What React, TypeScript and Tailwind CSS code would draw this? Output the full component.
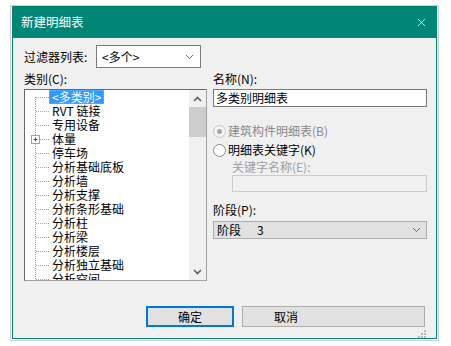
import { X } from 'lucide-react';

const treeItems = [
  '<多类别>',
  'RVT 链接',
  '专用设备',
  '体量',
  '停车场',
  '分析基础底板',
  '分析墙',
  '分析支撑',
  '分析条形基础',
  '分析柱',
  '分析梁',
  '分析楼层',
  '分析独立基础',
  '分析空间',
];

function Chevron({ up = false, thin = false }: { up?: boolean; thin?: boolean }) {
  return (
    <svg width="9" height="6" viewBox="0 0 9 6">
      <polyline
        points={up ? '1,5 4.5,1.5 8,5' : '1,1 4.5,4.5 8,1'}
        fill="none"
        stroke={thin ? '#6d6d6d' : '#606060'}
        strokeWidth={thin ? 1 : 1.6}
      />
    </svg>
  );
}

function TreeRow({ label, index }: { label: string; index: number }) {
  const first = index === 0;
  const hasPlus = label === '体量';
  return (
    <div className="flex h-[14px] items-center">
      {/* connector lines */}
      <svg width="24" height="14" viewBox="0 0 24 14" className="shrink-0">
        <line x1="10.5" y1={first ? 7 : 0} x2="10.5" y2="14" stroke="#a0a0a0" strokeDasharray="1 1" />
        <line x1="11" y1="7.5" x2="24" y2="7.5" stroke="#a0a0a0" strokeDasharray="1 1" />
        {hasPlus && (
          <g>
            <rect x="6.5" y="3.5" width="8" height="8" fill="#fff" stroke="#a0a0a0" />
            <line x1="8.5" y1="7.5" x2="12.5" y2="7.5" stroke="#2c4c9c" />
            <line x1="10.5" y1="5.5" x2="10.5" y2="9.5" stroke="#2c4c9c" />
          </g>
        )}
      </svg>
      {first ? (
        <span className="h-[14px] px-[2px] flex items-center bg-[#3399ff] text-white border border-dotted border-[#e0a040] whitespace-nowrap">
          <span className="leading-[12px]">{label}</span>
        </span>
      ) : (
        <span className="pl-[3px] leading-[14px] whitespace-nowrap">{label}</span>
      )}
    </div>
  );
}

function ResizeGrip() {
  const dots = [
    [6, 0],
    [3, 3],
    [6, 3],
    [0, 6],
    [3, 6],
    [6, 6],
  ];
  return (
    <svg width="8" height="8" viewBox="0 0 8 8">
      {dots.map(([x, y]) => (
        <rect key={`${x}-${y}`} x={x} y={y} width="2" height="2" fill="#b8b8b8" />
      ))}
    </svg>
  );
}

export default function App() {
  return (
    <div className="w-[451px] h-[346px] bg-white pt-[5px] pl-[10px] font-['Noto_Sans_CJK_SC','Noto_Sans',sans-serif] text-[12px] text-black">
      <div className="w-[429px] h-[336px] border border-[#cfcfcf] px-px pb-px">
        <div className="w-[425px] h-[333px] border border-[#018574] flex flex-col">
          {/* Title bar */}
          <div className="h-[31px] bg-[#018574] flex items-center justify-between pl-[8px] pr-[8px] text-white">
            <span className="text-[12.5px] leading-none">新建明细表</span>
            <X className="w-[13px] h-[13px]" strokeWidth={1.4} />
          </div>

          {/* Body */}
          <div className="flex-1 bg-[#f0f0f0] pt-[7px] pl-[11px] pr-[9px] flex flex-col">
            {/* Filter list */}
            <div className="flex items-center h-[23px]">
              <span className="w-[72px]">过滤器列表:</span>
              <div className="w-[105px] h-[23px] bg-white border border-[#7a7a7a] flex items-center justify-between pl-[5px] pr-[6px]">
                <span>&lt;多个&gt;</span>
                <Chevron thin />
              </div>
            </div>

            <div className="flex gap-[6px]">
              {/* Category tree */}
              <div className="w-[183px] flex flex-col">
                <div className="h-[21px] flex items-center pt-[1px]">类别(C):</div>
                <div className="h-[192px] bg-white border border-[#a0a0a0] border-t-[#696969] border-l-[#696969] flex">
                  <div className="flex-1 overflow-hidden">
                    {treeItems.map((item, i) => (
                      <TreeRow key={item} label={item} index={i} />
                    ))}
                  </div>
                  <div className="w-[17px] bg-[#f0f0f0] flex flex-col items-center">
                    <div className="h-[17px] flex items-center justify-center">
                      <Chevron up />
                    </div>
                    <div className="w-[17px] h-[30px] bg-[#cdcdcd]" />
                    <div className="flex-1" />
                    <div className="h-[17px] flex items-center justify-center">
                      <Chevron />
                    </div>
                  </div>
                </div>
              </div>

              {/* Right side */}
              <div className="flex-1 flex flex-col">
                <div className="h-[21px] flex items-center">名称(N):</div>
                <div className="h-[18px] bg-white border border-[#7a7a7a] flex items-center pl-[2px]">多类别明细表</div>

                <div className="mt-[15px] h-[18px] flex items-center text-[#8a8a8a]">
                  <span className="w-[13px] h-[13px] rounded-full border border-[#c8c8c8] bg-[#f4f4f4] flex items-center justify-center">
                    <span className="w-[5px] h-[5px] rounded-full bg-[#a6a6a6]" />
                  </span>
                  <span className="ml-[2px]">建筑构件明细表(B)</span>
                </div>
                <div className="mt-px h-[18px] flex items-center">
                  <span className="w-[13px] h-[13px] rounded-full border border-[#8a8a8a] bg-white" />
                  <span className="ml-[2px]">明细表关键字(K)</span>
                </div>
                <div className="h-[16px] flex items-center pl-[19px] text-[#a0a0a0]">关键字名称(E):</div>
                <div className="ml-[19px] h-[17px] bg-[#f0f0f0] border border-[#cccccc]" />

                <div className="mt-[9px] h-[18px] flex items-center">阶段(P):</div>
                <div className="mt-[2px] h-[18px] bg-[#e1e1e1] border border-[#adadad] flex items-center justify-between pl-[3px] pr-[5px]">
                  <span>
                    阶段<span className="ml-[16px]">3</span>
                  </span>
                  <Chevron thin />
                </div>
              </div>
            </div>

            {/* Buttons */}
            <div className="mt-[25px] flex justify-end gap-[8px] pr-[2px]">
              <button className="w-[88px] h-[21px] bg-[#e1e1e1] border-2 border-[#0078d7] flex items-center justify-center">
                确定
              </button>
              <button className="w-[183px] h-[21px] bg-[#e1e1e1] border border-[#adadad] flex items-center pl-[31px]">
                取消
              </button>
            </div>
            <div className="mt-[3px] flex justify-end pr-[1px]">
              <ResizeGrip />
            </div>
          </div>
        </div>
      </div>
    </div>
  );
}
